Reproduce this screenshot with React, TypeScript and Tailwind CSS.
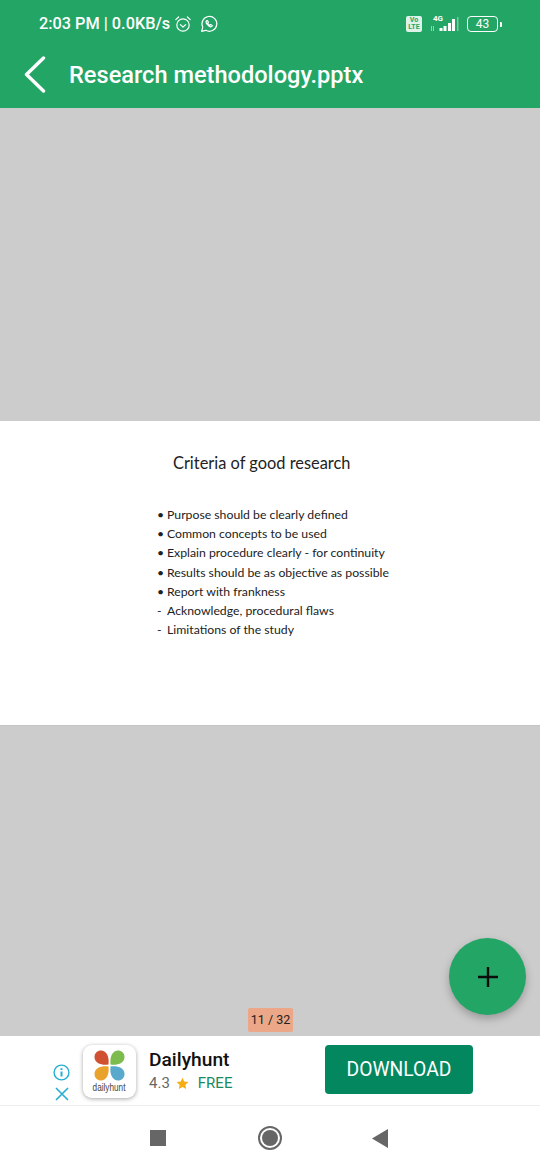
const bullets = [
  ["•", "Purpose should be clearly defined"],
  ["•", "Common concepts to be used"],
  ["•", "Explain procedure clearly - for continuity"],
  ["•", "Results should be as objective as possible"],
  ["•", "Report with frankness"],
  ["-", "Acknowledge, procedural flaws"],
  ["-", "Limitations of the study"],
]

function StatusBar() {
  return (
    <div className="flex h-[48px] items-center pl-[39px] pr-[38px] text-white">
      <span className="font-['Roboto',sans-serif] text-[16.3px] font-medium leading-none">2:03 PM | 0.0KB/s</span>
      <svg width="18" height="18" viewBox="0 0 18 18" fill="none" stroke="white" strokeWidth="1.2" strokeLinecap="round" strokeLinejoin="round" className="ml-[4px]">
        <circle cx="9" cy="10" r="6.2" />
        <path d="M6.3 9.6 9 12l2.7-2.4" />
        <path d="M1.8 4.6 4.6 2M16.2 4.6 13.4 2" />
      </svg>
      <svg width="18" height="18" viewBox="0 0 18 18" fill="none" stroke="white" strokeWidth="1.2" strokeLinecap="round" strokeLinejoin="round" className="ml-[8px]">
        <path d="M1.6 16.4 2.8 12.2A7.4 7.4 0 1 1 5.8 15.3Z" />
        <path d="M6.6 5.6c-.8.8-.7 2 .4 3.6 1.2 1.6 2.6 2.6 3.9 2.6.7 0 1.3-.5 1.4-1.3l-1.8-1-.8.7c-.9-.4-1.6-1.1-2-2l.7-.9-.9-1.8z" />
      </svg>
      <div className="ml-auto flex items-center">
        <div className="flex h-[16px] w-[16px] flex-col items-center justify-center rounded-[2px] bg-white/85 font-['Roboto',sans-serif] text-[7px] font-bold leading-[7px] text-[#23a566]">
          <span>Vo</span>
          <span>LTE</span>
        </div>
        <div className="relative ml-[9px] h-[18px] w-[28px]">
          <span className="absolute left-[2px] top-[-1px] font-['Roboto',sans-serif] text-[8px] font-bold leading-[10px]">4G</span>
          <svg width="28" height="18" viewBox="0 0 28 18" className="absolute left-0 top-0" fill="white">
            <rect x="0" y="11" width="1" height="5" opacity="0.5" />
            <rect x="2" y="11" width="1" height="5" opacity="0.5" />
            <rect x="8.500" y="13" width="3" height="3" />
            <rect x="12.500" y="11" width="3" height="5" />
            <rect x="17" y="8" width="3" height="8" />
            <rect x="21" y="4" width="3" height="12" />
            <rect x="26" y="2" width="1.500" height="14" opacity="0.4" />
          </svg>
        </div>
        <div className="ml-[8px] flex h-[16px] w-[31px] items-center justify-center rounded-[4px] border-[1.5px] border-white font-['Roboto',sans-serif] text-[12px] leading-none">
          43
        </div>
        <div className="ml-[2px] h-[5px] w-[2px] rounded-r-[1px] bg-white" />
      </div>
    </div>
  )
}

function Slide() {
  return (
    <div className="h-[304px] bg-white pl-[157px] pt-[32px] font-['Lato',sans-serif] text-[#222222]">
      <div className="pl-[16px] text-[16.4px] leading-[20px]">Criteria of good research</div>
      <ul className="mt-[34px] flex flex-col gap-[3.2px]">
        {bullets.map(([mark, text]) => (
          <li key={text} className="flex h-[16px] items-center text-[12.25px] leading-[16px]">
            <span className="w-[10px]">{mark}</span>
            <span>{text}</span>
          </li>
        ))}
      </ul>
    </div>
  )
}

function AppIcon() {
  return (
    <div className="flex h-[53px] w-[53px] flex-col items-center rounded-[9px] bg-white pt-[5px] shadow-[0_1px_4px_rgba(0,0,0,0.35)]">
      <svg width="31" height="31" viewBox="0 0 31 31">
        <path d="M14.500 14.500C8 15.500 .5 13.500.5 7 .5 3 3.500 .5 7 .5 12 .5 15.500 6 14.500 14.500Z" fill="#cf5131" />
        <path d="M16.500 14.500C23 15.500 30.500 13.500 30.500 7 30.500 3 27.500 .5 24 .5 19 .5 15.500 6 16.500 14.500Z" fill="#7cbc4f" />
        <path d="M14.500 16.500C8 15.500 .5 17.500.5 24 .5 28 3.500 30.500 7 30.500 12 30.500 15.500 25 14.500 16.500Z" fill="#e9a32d" />
        <path d="M16.500 16.500C23 15.500 30.500 17.500 30.500 24 30.500 28 27.500 30.500 24 30.500 19 30.500 15.500 25 16.500 16.500Z" fill="#58a9cc" />
      </svg>
      <span className="mt-[1px] font-['Liberation_Sans',sans-serif] text-[10.500px] leading-[11px] text-[#444444] [transform:scaleX(0.78)]">dailyhunt</span>
    </div>
  )
}

function AdBar() {
  return (
    <div className="flex h-[69px] items-center bg-white">
      <div className="ml-[53px] mt-[23px] flex w-[17px] flex-col items-center gap-[6px]">
        <svg width="17" height="17" viewBox="0 0 17 17" fill="none" stroke="#25afcf" strokeWidth="1.4">
          <circle cx="8.500" cy="8.500" r="7.400" />
          <path d="M8.500 7.500v5" strokeWidth="2" />
          <path d="M8.500 4.200v1.800" strokeWidth="2" />
        </svg>
        <svg width="14" height="14" viewBox="0 0 14 14" fill="none" stroke="#25afcf" strokeWidth="1.6">
          <path d="M1 1l12 12M13 1 1 13" />
        </svg>
      </div>
      <div className="ml-[13px] mt-[2px]">
        <AppIcon />
      </div>
      <div className="ml-[13px] flex w-[176px] flex-col font-['Roboto',sans-serif]">
        <span className="text-[19.200px] font-medium leading-[24px] text-[#111111]">Dailyhunt</span>
        <div className="mt-[1px] flex items-center text-[15px] leading-[20px]">
          <span className="text-[#666666]">4.3</span>
          <svg width="13" height="13" viewBox="0 0 24 24" fill="#f4ad12" className="ml-[6px]">
            <path d="M12 1.500l3.200 7 7.600.9-5.600 5.200 1.500 7.500L12 18.300l-6.700 3.800 1.500-7.500L1.200 9.400l7.600-.9z" />
          </svg>
          <span className="ml-[9px] text-[#1a8a62]">FREE</span>
        </div>
      </div>
      <button className="mb-[2px] h-[49px] w-[148px] rounded-[4px] bg-[#03875f] font-['Roboto',sans-serif] text-[19.300px] leading-none text-white">
        DOWNLOAD
      </button>
    </div>
  )
}

function NavBar() {
  return (
    <div className="relative flex h-[65px] items-start border-t border-[#eeeeee] bg-white pt-[24px]">
      <div className="ml-[150px] h-[16px] w-[16px] bg-[#666666]" />
      <div className="ml-[92px] mt-[-4px] flex h-[24px] w-[24px] items-center justify-center rounded-full border-[2px] border-[#666666]">
        <div className="h-[16px] w-[16px] rounded-full bg-[#666666]" />
      </div>
      <svg width="16" height="19" viewBox="0 0 16 19" className="ml-[90px] mt-[-1px]" fill="#666666">
        <path d="M16 0v19L0 9.500z" />
      </svg>
    </div>
  )
}

export default function App() {
  return (
    <div className="relative flex h-[1170px] w-[540px] flex-col overflow-hidden bg-[#cccccc]">
      <header className="h-[108px] bg-[#23a566] text-white">
        <StatusBar />
        <div className="flex h-[52px] items-center pl-[24px]">
          <svg width="22" height="37" viewBox="0 0 22 37" fill="none" stroke="white" strokeWidth="3.400" strokeLinecap="round" strokeLinejoin="round">
            <path d="M19.500 2 2.500 18.500 19.500 35" />
          </svg>
          <h1 className="ml-[23px] pt-[3px] font-['Roboto',sans-serif] text-[23.600px] font-medium leading-none">Research methodology.pptx</h1>
        </div>
      </header>
      <div className="h-[313px]" />
      <Slide />
      <div className="h-[311px] border-t border-[#c4c4c4]" />
      <AdBar />
      <NavBar />
      <div className="absolute left-[248px] top-[1008px] flex h-[24px] w-[45px] items-center justify-center rounded-[2px] bg-[#eba788] font-['Roboto',sans-serif] text-[12.500px] leading-none text-[#222222]">
        11 / 32
      </div>
      <button className="absolute left-[449px] top-[938px] flex h-[77px] w-[77px] items-center justify-center rounded-full bg-[#23a566] shadow-[0_4px_8px_rgba(0,0,0,0.25)]">
        <svg width="20" height="20" viewBox="0 0 20 20" stroke="#0c0c0c" strokeWidth="2.400">
          <path d="M10 0v20M0 10h20" />
        </svg>
      </button>
    </div>
  )
}
